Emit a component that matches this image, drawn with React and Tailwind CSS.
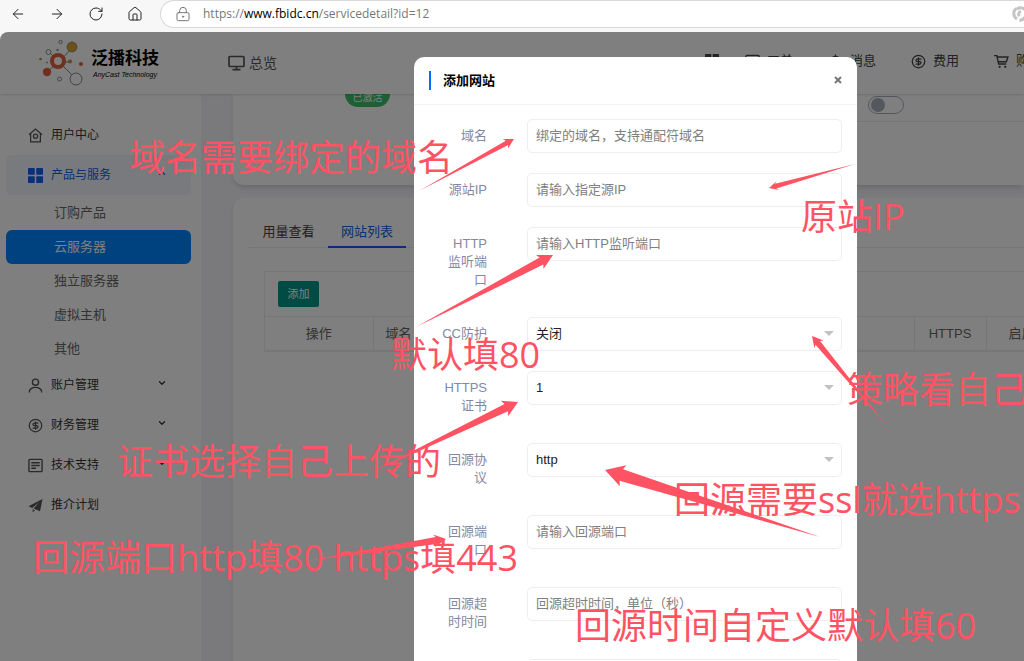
import { useState } from "react";
import { ArrowLeft, ArrowRight, ChevronDown, ChevronUp, CircleDollarSign, House, LockKeyhole, RotateCw } from "lucide-react";

const subItems = ["订购产品", "云服务器", "独立服务器", "虚拟主机", "其他"];

const fields = [
  { id: "domain", label: "域名", placeholder: "绑定的域名，支持通配符域名" },
  { id: "origin", label: "源站IP", placeholder: "请输入指定源IP" },
  { id: "port", label: "HTTP监听端口", placeholder: "请输入HTTP监听端口" },
  { id: "cc", label: "CC防护", options: ["关闭"] },
  { id: "cert", label: "HTTPS证书", options: ["1"] },
  { id: "protocol", label: "回源协议", options: ["http", "https"] },
  { id: "originPort", label: "回源端口", placeholder: "请输入回源端口" },
  { id: "timeout", label: "回源超时时间", placeholder: "回源超时时间，单位（秒）" },
  { id: "extra", label: "", placeholder: "" },
];

const notes = [
  { text: "域名需要绑定的域名", place: "left-[129px] top-[138px]" },
  { text: "原站IP", place: "left-[801px] top-[197px]" },
  { text: "默认填80", place: "left-[391px] top-[335px]" },
  { text: "策略看自己", place: "left-[847px] top-[370px]" },
  { text: "证书选择自己上传的", place: "left-[117px] top-[442px]" },
  { text: "回源需要ssl就选https", place: "left-[674px] top-[480px]" },
  { text: "回源端口http填80 https填443", place: "left-[33px] top-[538px]" },
  { text: "回源时间自定义默认填60", place: "left-[575px] top-[606px]" },
];

// tail, tip, head length, head width, shaft width
const arrows = [
  [419, 191, 514, 139, 10, 11, 5],
  [855, 164, 769, 188, 9, 9, 5],
  [416, 327, 553, 255, 15, 16, 8],
  [887, 426, 812, 336, 11, 12, 6],
  [370, 473, 518, 402, 15, 17, 8],
  [820, 537, 605, 470, 19, 22, 12],
  [306, 561, 446, 539, 12, 13, 7],
];

const arrowPoints = ([x1, y1, x2, y2, head, headWidth, shaft]) => {
  const length = Math.hypot(x2 - x1, y2 - y1);
  const ux = (x2 - x1) / length;
  const uy = (y2 - y1) / length;
  const at = (back, side) => `${x2 - ux * back - uy * side},${y2 - uy * back + ux * side}`;
  return [
    `${x1},${y1}`,
    at(head - 2, shaft / 2),
    at(head, headWidth / 2),
    `${x2},${y2}`,
    at(head, -headWidth / 2),
    at(head - 2, -shaft / 2),
  ].join(" ");
};

const Tiles = ({ className }) => (
  <svg viewBox="0 0 14 14" className={className} fill="currentColor">
    <rect width="6.3" height="6.3" rx="0.6" />
    <rect x="7.7" width="6.3" height="6.3" rx="0.6" />
    <rect y="7.7" width="6.3" height="6.3" rx="0.6" />
    <rect x="7.7" y="7.7" width="6.3" height="6.3" rx="0.6" />
  </svg>
);

const HomeRing = ({ className }) => (
  <svg viewBox="0 0 16 16" className={className} fill="none" stroke="currentColor" strokeWidth="1.3">
    <path d="M1 7.2 8 1.2l7 6M2.8 6v8.7h10.4V6" />
    <circle cx="8" cy="8.8" r="2.2" />
  </svg>
);

const Person = ({ className }) => (
  <svg viewBox="0 0 16 16" className={className} fill="none" stroke="currentColor" strokeWidth="1.5">
    <circle cx="8" cy="4.5" r="3.3" />
    <path d="M1.5 15.5v-1a6.5 4.5 0 0 1 13 0v1" />
  </svg>
);

const Screen = ({ className }) => (
  <svg viewBox="0 0 17 16" className={className} fill="none" stroke="currentColor" strokeWidth="1.7">
    <rect x="1" y="1.5" width="15" height="10" rx="1" />
    <path d="M8.5 11.5v3M4.5 14.6h8" />
  </svg>
);

const Cart = ({ className }) => (
  <svg viewBox="0 0 16 16" className={className} fill="none" stroke="currentColor" strokeWidth="1.5">
    <path d="M0 1.7h3l2 9h8M3.5 3.2h11.3l-1.6 5H5" />
    <circle cx="6" cy="13.7" r="1.2" fill="currentColor" stroke="none" />
    <circle cx="12" cy="13.7" r="1.2" fill="currentColor" stroke="none" />
  </svg>
);

const Ticket = ({ className }) => (
  <svg viewBox="0 0 16 16" className={className} fill="none" stroke="currentColor" strokeWidth="1.5">
    <rect x="1" y="1.5" width="14" height="13" rx="1" />
    <path d="M3.5 5h9M3.5 8h9M3.5 11h5" />
  </svg>
);

const Plane = ({ className }) => (
  <svg viewBox="0 0 16 16" className={className} fill="currentColor">
    <path d="M15.5 1 .5 8.8l4 1.8L12.5 4 6 11.2l6.8 3zM5 12v3.2l2.4-2.1z" />
  </svg>
);

const Bell = ({ className }) => (
  <svg viewBox="0 0 16 16" className={className} fill="none" stroke="currentColor" strokeWidth="1.5">
    <path d="M8 .5V2M3.5 12V7a4.5 4.5 0 0 1 9 0v5M1.5 12.3h13M6.5 14.8h3" />
  </svg>
);

const Logo = () => (
  <div className="flex shrink-0 items-center gap-1.5">
    <svg viewBox="0 0 46 48" className="h-12 w-[46px] shrink-0" fill="none">
      <path d="M20 23 33 9M20 23 9 12M20 23 9 32M20 23 37 40M20 23h12" stroke="#666" strokeWidth="0.8" />
      <circle cx="19" cy="22" r="6" stroke="#e0603c" strokeWidth="4" fill="#fff" />
      <circle cx="33" cy="8" r="5" fill="#dba52f" stroke="#666" strokeWidth="0.6" />
      <circle cx="8" cy="33" r="4.2" fill="#e0603c" />
      <circle cx="37" cy="40" r="6" fill="#fff" stroke="#666" strokeWidth="0.8" />
      <circle cx="9.5" cy="13" r="2.5" fill="#fff" stroke="#666" strokeWidth="0.7" />
      <circle cx="21.5" cy="3" r="1.7" stroke="#666" strokeWidth="0.7" />
      <circle cx="20.5" cy="40" r="2" stroke="#666" strokeWidth="0.7" />
      <circle cx="42" cy="25" r="2" fill="#e0603c" />
      <circle cx="31" cy="22.5" r="1.7" fill="#dba52f" stroke="#666" strokeWidth="0.5" />
      <circle cx="1.5" cy="20" r="1.3" fill="#b58a20" />
      <circle cx="18.5" cy="11" r="1.2" fill="#6c9fb5" />
      <circle cx="8" cy="23.5" r="1" fill="#999" />
    </svg>
    <div className="w-[68px] whitespace-nowrap text-black">
      <div className="pt-1 text-[17px] leading-5 font-bold">泛播科技</div>
      <div className="pl-0.5 font-['Liberation_Sans'] text-[7px] leading-3 italic">AnyCast Technology</div>
    </div>
  </div>
);

const BrowserBar = () => (
  <div className="flex h-8 shrink-0 items-start bg-[#f7f7f7] pl-2.5 text-[#222]">
    <div className="flex h-7 items-center gap-[23px]">
      <button type="button" aria-label="Back"><ArrowLeft className="size-4" strokeWidth={1.5} /></button>
      <button type="button" aria-label="Forward"><ArrowRight className="size-4" strokeWidth={1.5} /></button>
      <button type="button" aria-label="Reload"><RotateCw className="size-4" strokeWidth={1.5} /></button>
      <button type="button" aria-label="Home"><House className="size-4" strokeWidth={1.5} /></button>
    </div>
    <div className="ml-[17px] flex h-7 flex-1 items-center rounded-l-full border border-r-0 border-[#d9d9d9] bg-white pl-3.5">
      <LockKeyhole className="size-4 text-[#777]" strokeWidth={1.5} />
      <span className="ml-3 font-['Open_Sans'] text-xs text-[#777]">
        https://<span className="text-black">www.fbidc.cn</span>/servicedetail?id=12
      </span>
      <svg viewBox="0 0 16 16" className="-mr-1 ml-auto size-4 text-[#c4c4c4]" fill="none" stroke="currentColor" strokeWidth="3">
        <path d="M5 13C1 10.5.5 5 4.5 2.5M5 3c4-2.5 8-1 9 3M14 6c.5 4.5-2 8-6.5 8.5M9 5.5c-2.5.5-3 3-1.5 4.5" />
      </svg>
    </div>
  </div>
);

const NavItem = ({ icon, label }) => (
  <a href="#" className="flex shrink-0 items-center gap-[7px]">
    {icon}
    <span className="text-[13px] whitespace-nowrap">{label}</span>
  </a>
);

const TopNav = () => (
  <header className="relative flex h-[62px] shrink-0 items-center bg-white pl-[39px] text-[#555] shadow-sm">
    <Logo />
    <a href="#" className="ml-[69px] flex shrink-0 items-center gap-1">
      <Screen className="h-4 w-[17px]" />
      <span className="text-sm whitespace-nowrap">总览</span>
    </a>
    <nav className="ml-[428px] flex shrink-0 items-center pb-1 text-[#444]">
      <a href="#" aria-label="应用" className="mr-[26px]"><Tiles className="size-3.5" /></a>
      <div className="flex gap-[35px]">
        <NavItem icon={<Ticket className="size-[15px]" />} label="工单" />
        <NavItem icon={<Bell className="size-[15px]" />} label="消息" />
        <NavItem icon={<CircleDollarSign className="size-[15px]" />} label="费用" />
        <NavItem icon={<Cart className="size-[15px]" />} label="购物车" />
      </div>
    </nav>
  </header>
);

const MenuRow = ({ icon, label, chevron, active }) => (
  <a
    href="#"
    className={`flex h-10 items-center gap-2 rounded-md pr-6 pl-[22px] text-xs ${active ? "bg-[#f0f5fb] text-[#1060e8]" : "text-[#333]"}`}
  >
    {icon}
    <span>{label}</span>
    {chevron && <span className="ml-auto pb-1">{chevron}</span>}
  </a>
);

const Sidebar = () => {
  const down = <ChevronDown className="size-2.5" strokeWidth={3} />;
  return (
    <aside className="w-[201px] shrink-0 bg-white pt-[21px] pr-2.5 pl-1.5">
      <MenuRow icon={<HomeRing className="size-[15px] text-[#555]" />} label="用户中心" />
      <MenuRow active icon={<Tiles className="size-[15px]" />} label="产品与服务" chevron={<ChevronUp className="size-2.5" strokeWidth={3} />} />
      <div className="h-[170px] pt-px">
        {subItems.map((item) => (
          <a
            key={item}
            href="#"
            className={`flex h-[34px] items-center rounded-md pl-12 text-[13px] ${item === "云服务器" ? "bg-[#0084ff] text-white" : "text-[#666]"}`}
          >
            {item}
          </a>
        ))}
      </div>
      <MenuRow icon={<Person className="size-[15px] text-[#555]" />} label="账户管理" chevron={down} />
      <MenuRow icon={<CircleDollarSign className="size-[15px] text-[#555]" />} label="财务管理" chevron={down} />
      <MenuRow icon={<Ticket className="size-[15px] text-[#555]" />} label="技术支持" chevron={down} />
      <MenuRow icon={<Plane className="size-[15px] text-[#555]" />} label="推介计划" />
    </aside>
  );
};

const Content = () => (
  <main className="min-w-0 flex-1 bg-[#f5f5fb] pl-8">
    <section className="h-[91px] rounded-bl-[10px] bg-white shadow-md">
      <div className="flex">
        <div className="w-[400px] shrink-0 pl-28">
          <span className="block h-[13px] w-[45px] rounded-b-full bg-[#3dc169] text-center text-[10px] leading-2 text-white">已激活</span>
        </div>
        <div className="flex h-7 flex-1 items-start border-b border-[#ececec] pt-0.5 pl-[235px]">
          <label className="flex h-[18px] w-9 items-center rounded-full border border-[#a8b0bb] pl-0.5">
            <input type="checkbox" aria-label="开关" className="size-3.5 appearance-none rounded-full bg-[#a8b0bb]" />
          </label>
        </div>
      </div>
    </section>

    <section className="mt-[13px] h-full rounded-tl-[10px] bg-white pt-[19px] pl-4 shadow-md">
      <div className="flex h-[31px] border-b border-[#ececec] text-[13px] text-[#444]">
        <button type="button" className="h-[31px] w-[79px] border-b-2 border-transparent">用量查看</button>
        <button type="button" className="h-[31px] w-[78px] border-b-2 border-[#1060e8] text-[#1060e8]">网站列表</button>
      </div>
      <div className="mt-[23px] ml-[15px] overflow-hidden border border-r-0 border-[#ececec]">
        <div className="h-11 px-[13px] py-[9px]">
          <button type="button" className="h-[26px] w-[41px] rounded-[2px] bg-[#009688] text-[11px] text-white">添加</button>
        </div>
        <table className="w-[900px] table-fixed border-collapse text-[13px] text-[#666]">
          <thead>
            <tr className="h-[34px] border-y border-[#ececec]">
              <th className="w-[108px] border-r border-[#ececec] font-normal">操作</th>
              <th className="w-[541px] border-r border-[#ececec] pl-3 text-left font-normal">域名</th>
              <th className="w-[72px] border-r border-[#ececec] font-normal">HTTPS</th>
              <th className="pl-[22px] text-left font-normal">启用</th>
            </tr>
          </thead>
        </table>
      </div>
    </section>
  </main>
);

const Field = ({ field }) => {
  const [value, setValue] = useState(field.options ? field.options[0] : "");
  const box = "h-[34px] w-full rounded-[5px] border border-[#eee] bg-white px-2 text-[13px] text-[#222] outline-none placeholder:text-[#808080]";
  return (
    <div className="mb-5 flex items-start">
      <label htmlFor={field.id} className="w-[73px] shrink-0 py-2 pl-[27px] text-right text-[13px] leading-[18px] text-[#8688a3]">
        {field.label}
      </label>
      <div className="relative ml-10 flex-1">
        {field.options ? (
          <>
            <select id={field.id} value={value} onChange={(event) => setValue(event.target.value)} className={`${box} appearance-none`}>
              {field.options.map((option) => (
                <option key={option}>{option}</option>
              ))}
            </select>
            <svg viewBox="0 0 10 5" className="pointer-events-none absolute top-3.5 right-2 h-[5px] w-2.5 fill-[#c2c2c2]">
              <path d="M0 0h10L5 5z" />
            </svg>
          </>
        ) : (
          <input id={field.id} value={value} placeholder={field.placeholder} onChange={(event) => setValue(event.target.value)} className={`${box} pb-0.5`} />
        )}
      </div>
    </div>
  );
};

const SiteDialog = () => (
  <div role="dialog" aria-labelledby="dialog-title" className="absolute top-[57px] left-[414px] w-[443px] rounded-[10px] bg-white">
    <div className="flex h-12 items-center border-b border-[#f3f3f3] pr-3.5 pl-[15px]">
      <span className="h-[19px] w-0.5 bg-[#006eff]" />
      <h2 id="dialog-title" className="ml-3 text-[13px] font-bold text-black">添加网站</h2>
      <button type="button" aria-label="关闭" className="ml-auto pb-0.5">
        <svg viewBox="0 0 10 10" className="size-2.5" stroke="#777" strokeWidth="2">
          <path d="m2 2 6 6M8 2 2 8" />
        </svg>
      </button>
    </div>
    <form className="pt-3.5 pr-[15px]">
      {fields.map((field) => (
        <Field key={field.id} field={field} />
      ))}
    </form>
  </div>
);

const App = () => (
  <div className="relative flex h-screen flex-col overflow-hidden bg-[#f7f7f7] font-['Liberation_Sans','Noto_Sans_CJK_SC',sans-serif]">
    <BrowserBar />
    <div className="relative flex min-h-0 flex-1 flex-col overflow-hidden rounded-tl-lg">
      <TopNav />
      <div className="flex min-h-0 flex-1">
        <Sidebar />
        <Content />
      </div>
      <div className="absolute inset-0 bg-black/50" />
    </div>
    <SiteDialog />
    <svg className="pointer-events-none absolute inset-0 size-full fill-[#ff5364]">
      {arrows.map((arrow) => (
        <polygon key={arrow.join()} points={arrowPoints(arrow)} />
      ))}
    </svg>
    {notes.map((note) => (
      <p
        key={note.text}
        className={`pointer-events-none absolute font-['Open_Sans','Noto_Sans_CJK_SC',sans-serif] text-4xl leading-10 whitespace-nowrap text-[#ff5364] ${note.place}`}
      >
        {note.text}
      </p>
    ))}
  </div>
);

export default App;
